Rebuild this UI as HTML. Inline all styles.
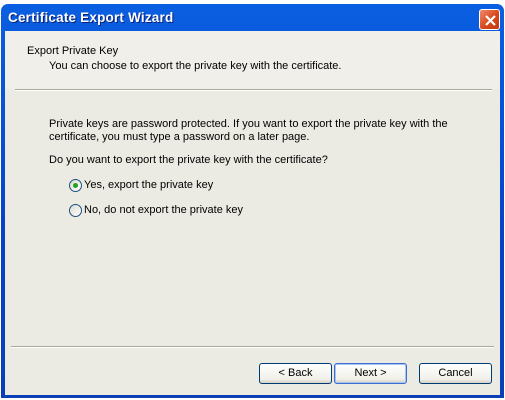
<!DOCTYPE html>
<html><head><meta charset="utf-8"><style>
*{margin:0;padding:0;box-sizing:border-box}
body{width:505px;height:400px;background:#fff;position:relative;overflow:hidden;font-family:"Liberation Sans",Tahoma,sans-serif;font-size:11px;color:#000}
.win{position:absolute;left:1px;top:4px;width:503px;height:394px;background:linear-gradient(#0a5fe0,#0542c8 60%,#0a3fb8);border-radius:7px 7px 0 0}
.title{position:absolute;left:7px;top:6px;color:#fff;font-weight:bold;font-size:13.5px;text-shadow:1px 1px #0a1e78;letter-spacing:0.2px}
.close{position:absolute;left:478px;top:5px;width:21px;height:21px;border:1px solid #fff;border-radius:3px;background:linear-gradient(135deg,#f08a6a,#d8481c 55%,#c03810)}
.close svg{position:absolute;left:4px;top:4px}
.client{position:absolute;left:4px;top:27px;width:495px;height:364px;background:#ecebe3}
.hdr{position:absolute;left:0;top:0;width:495px;height:58px;background:#f0efea}
.sep{position:absolute;left:6px;height:2px;border-top:1px solid #aca899;border-bottom:1px solid #fff;width:483px}
.t{position:absolute;white-space:nowrap}
.radio{position:absolute;width:13px;height:13px;border:1px solid #1c5180;border-radius:50%;background:linear-gradient(135deg,#dcdad0,#fff)}
.dot{position:absolute;left:3px;top:3px;width:5px;height:5px;border-radius:50%;background:#21a121}
.btn{position:absolute;top:332px;width:73px;height:21px;border:1px solid #003c74;border-radius:3px;background:linear-gradient(#fff,#f0efe8 80%,#d6d0c5);text-align:center;line-height:19px;font-size:11px}
</style></head><body>
<div class="win">
<div class="title">Certificate Export Wizard</div>
<div class="close"><svg width="13" height="13"><path d="M2 2L11 11M11 2L2 11" stroke="#fff" stroke-width="2.2"/></svg></div>
<div class="client">
<div class="hdr"></div>
<div class="t" style="left:22px;top:14px">Export Private Key</div>
<div class="t" style="left:44px;top:29px">You can choose to export the private key with the certificate.</div>
<div class="sep" style="top:58px;left:10px;width:477px"></div>
<div class="t" style="left:44px;top:87px;line-height:13px">Private keys are password protected. If you want to export the private key with the<br>certificate, you must type a password on a later page.</div>
<div class="t" style="left:44px;top:123px">Do you want to export the private key with the certificate?</div>
<div class="radio" style="left:64px;top:148px"><div class="dot"></div></div>
<div class="t" style="left:79px;top:148px">Yes, export the private key</div>
<div class="radio" style="left:64px;top:173px"></div>
<div class="t" style="left:79px;top:173px">No, do not export the private key</div>
<div class="sep" style="top:315px;left:6px;width:483px"></div>
<div class="btn" style="left:254px">&lt; Back</div>
<div class="btn" style="left:329px;border-color:#3c6ed0;box-shadow:inset 0 0 0 1px #a8c4f0">Next &gt;</div>
<div class="btn" style="left:414px">Cancel</div>
</div>
</div>
</body></html>
